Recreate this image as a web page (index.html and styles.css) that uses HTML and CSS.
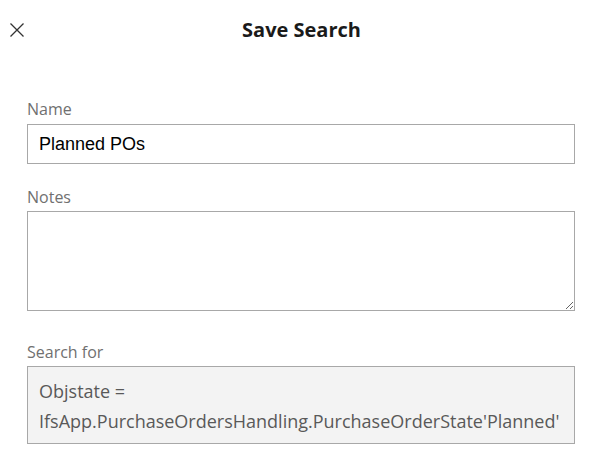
FILE: index.html
```html
<!DOCTYPE html>
<html lang="en">
<head>
<meta charset="utf-8">
<title>Save Search</title>
<link rel="stylesheet" href="styles.css">
</head>
<body>
<div class="dialog">
  <header class="header">
    <button class="close" aria-label="Close">
      <svg width="14" height="14" viewBox="0 0 14 14"><path d="M0.5 0.5 L13.5 13.5 M13.5 0.5 L0.5 13.5" stroke="#333" stroke-width="1.3" fill="none"/></svg>
    </button>
    <h1 class="title">Save Search</h1>
    <div class="spacer"></div>
  </header>
  <form class="form">
    <div class="field field-name">
      <label class="label" for="name">Name</label>
      <input class="input" id="name" type="text" value="Planned POs">
    </div>
    <div class="field field-notes">
      <label class="label" for="notes">Notes</label>
      <textarea class="textarea" id="notes"></textarea>
    </div>
    <div class="field field-search">
      <span class="label">Search for</span>
      <div class="readonly">Objstate =<br>IfsApp.PurchaseOrdersHandling.PurchaseOrderState'Planned'</div>
    </div>
  </form>
</div>
</body>
</html>
```

FILE: styles.css
```css
html, body {
  margin: 0;
  padding: 0;
  background: #ffffff;
}
body {
  font-family: "Open Sans", "Noto Sans", sans-serif;
  color: #1a1a1a;
}
.dialog {
  width: 603px;
}
.header {
  display: grid;
  grid-template-columns: 1fr auto 1fr;
  align-items: center;
  padding: 16px 0;
}
.close {
  justify-self: start;
  margin-left: 10px;
  padding: 0;
  border: 0;
  background: none;
  width: 14px;
  height: 14px;
  display: flex;
}
.title {
  margin: 0;
  font-size: 20px;
  line-height: 28px;
  font-weight: 700;
  color: #1a1a1a;
}
.form {
  display: flex;
  flex-direction: column;
  padding: 38px 28px 0 27px;
}
.field {
  display: flex;
  flex-direction: column;
}
.field-notes {
  margin-top: 22px;
}
.field-search {
  margin-top: 30px;
}
.label {
  font-size: 16px;
  line-height: 22px;
  color: #707070;
  margin-bottom: 4px;
}
.field-notes .label {
  margin-bottom: 3px;
}
.field-search .label {
  margin-bottom: 3px;
}
.input {
  box-sizing: border-box;
  width: 548px;
  height: 40px;
  margin: 0;
  padding: 0 11px;
  border: 1px solid #a8a8a8;
  border-radius: 0;
  font-family: "Liberation Sans", Arial, sans-serif;
  font-size: 18px;
  color: #000;
  outline: none;
}
.textarea {
  display: block;
  box-sizing: border-box;
  width: 548px;
  height: 100px;
  margin: 0;
  padding: 6px 11px;
  border: 1px solid #a8a8a8;
  border-radius: 0;
  resize: both;
  font-family: "Open Sans", sans-serif;
  font-size: 16px;
  outline: none;
}
.readonly {
  box-sizing: border-box;
  width: 548px;
  padding: 9px 11px 7px;
  border: 1px solid #a8a8a8;
  background: #f3f3f3;
  font-size: 18px;
  line-height: 30px;
  color: #595959;
  white-space: nowrap;
}
```
